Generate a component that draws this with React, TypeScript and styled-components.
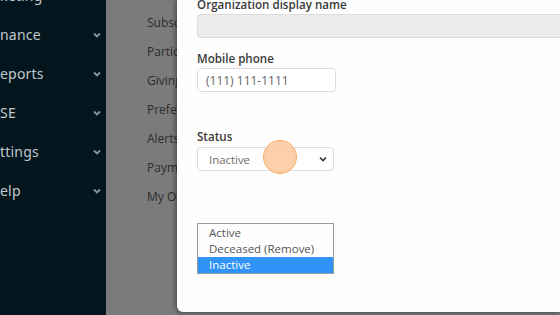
import React from "react";
import styled, { createGlobalStyle } from "styled-components";

const GlobalStyle = createGlobalStyle`
  html, body { margin: 0; padding: 0; }
  body {
    width: 560px;
    height: 315px;
    overflow: hidden;
    font-family: "Open Sans", "Noto Sans", sans-serif;
    background: #6f6f6f;
  }
`;

const Page = styled.div`
  display: grid;
  grid-template-columns: 106px 71px 1fr;
  width: 560px;
  height: 315px;
  overflow: hidden;
`;

const Sidebar = styled.nav`
  background: #03151d;
  display: flex;
  flex-direction: column;
  overflow: hidden;
`;

const NavItem = styled.div<{ first?: boolean }>`
  display: flex;
  align-items: center;
  justify-content: space-between;
  height: 39px;
  margin-top: ${({ first }) => (first ? "-24px" : "0")};
  padding-right: 5px;
  color: #c3c9cd;
  font-family: "Noto Sans", "Lato", sans-serif;
  font-size: 14px;
  letter-spacing: 0.2px;
`;

const Chevron = () => (
  <svg width="8" height="6" viewBox="0 0 8 6">
    <path d="M1 1.5 L4 4.5 L7 1.5" fill="none" stroke="#8b959b" strokeWidth="1.8" />
  </svg>
);

const Overlay = styled.div`
  background: #7b7b7b;
  display: flex;
  flex-direction: column;
  padding: 15px 0 0 41px;
  overflow: hidden;
`;

const SubLink = styled.div`
  height: 29px;
  white-space: nowrap;
  color: #2c2c2c;
  font-size: 12px;
  line-height: 16px;
`;

const Modal = styled.div`
  background: #fefefe;
  height: 312px;
  border-bottom-left-radius: 6px;
  box-shadow: -2px 0 4px rgba(0, 0, 0, 0.35);
  padding-left: 20px;
  position: relative;
`;

const Label = styled.div<{ gap: number }>`
  margin-top: ${({ gap }) => gap}px;
  font-size: 11.6px;
  font-weight: 600;
  line-height: 16px;
  color: #3a3a3a;
  white-space: nowrap;
`;

const TextInput = styled.div<{ width?: number; disabled?: boolean }>`
  box-sizing: border-box;
  margin-top: 1px;
  width: ${({ width }) => (width ? `${width}px` : "calc(100% + 10px)")};
  height: 24px;
  border: 1px solid #dcdcdc;
  border-radius: 4px;
  background: ${({ disabled }) => (disabled ? "#ececec" : "#fff")};
  padding-left: 8px;
  display: flex;
  align-items: center;
  font-size: 12px;
  color: #666;
`;

const Select = styled(TextInput)`
  margin-top: 2px;
  padding: 0 6px 0 11px;
  justify-content: space-between;
  color: #6a6a6a;
  font-size: 11.4px;
`;

const Cursor = styled.div`
  position: absolute;
  left: 86px;
  top: 140px;
  width: 34px;
  height: 34px;
  border-radius: 50%;
  box-sizing: border-box;
  background: rgba(252, 200, 156, 0.85);
  border: 1.5px solid #f7ad63;
`;

const ListBox = styled.div`
  box-sizing: border-box;
  margin-top: 52px;
  width: 137px;
  border: 1px solid #9a9a9a;
  padding: 1px 0 0;
`;

const Option = styled.div<{ selected?: boolean }>`
  height: 16px;
  line-height: 16px;
  padding-left: 11px;
  font-size: 11.5px;
  color: ${({ selected }) => (selected ? "#fff" : "#555")};
  background: ${({ selected }) => (selected ? "#3093f7" : "transparent")};
`;

const navItems = ["keting", "nance", "eports", "SE", "ttings", "elp"];
const subLinks = ["Subsc", "Partic", "Giving", "Prefe", "Alerts", "Paym", "My Or"];

export default function App() {
  return (
    <Page>
      <GlobalStyle />
      <Sidebar>
        {navItems.map((n, i) => (
          <NavItem key={n} first={i === 0}>
            <span>{n}</span>
            {i > 0 && <Chevron />}
          </NavItem>
        ))}
      </Sidebar>
      <Overlay>
        {subLinks.map((s) => (
          <SubLink key={s}>{s}</SubLink>
        ))}
      </Overlay>
      <Modal>
        <Label gap={-3}>Organization display name</Label>
        <TextInput disabled />
        <Label gap={13}>Mobile phone</Label>
        <TextInput width={139}>(111) 111-1111</TextInput>
        <Label gap={37}>Status</Label>
        <Select width={137}>
          <span>Inactive</span>
          <svg width="8" height="6" viewBox="0 0 8 6">
            <path d="M1 1.5 L4 4.5 L7 1.5" fill="none" stroke="#333" strokeWidth="1.6" />
          </svg>
        </Select>
        <ListBox>
          <Option>Active</Option>
          <Option>Deceased (Remove)</Option>
          <Option selected>Inactive</Option>
        </ListBox>
        <Cursor />
      </Modal>
    </Page>
  );
}
